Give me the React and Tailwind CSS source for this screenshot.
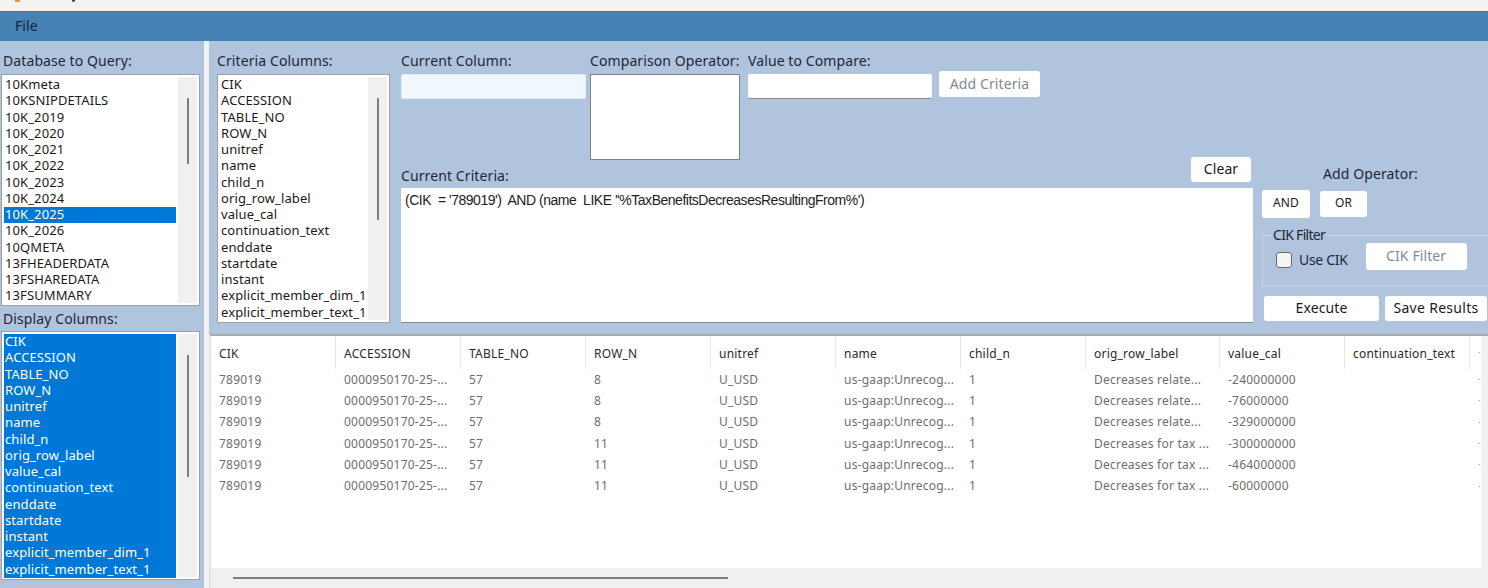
const databases = ["10Kmeta", "10KSNIPDETAILS", "10K_2019", "10K_2020", "10K_2021", "10K_2022", "10K_2023", "10K_2024", "10K_2025", "10K_2026", "10QMETA", "13FHEADERDATA", "13FSHAREDATA", "13FSUMMARY"];
const columns = ["CIK", "ACCESSION", "TABLE_NO", "ROW_N", "unitref", "name", "child_n", "orig_row_label", "value_cal", "continuation_text", "enddate", "startdate", "instant", "explicit_member_dim_1", "explicit_member_text_1"];

const gridCols = [
  { title: "CIK", w: "w-[125px]" },
  { title: "ACCESSION", w: "w-[125px]" },
  { title: "TABLE_NO", w: "w-[125px]" },
  { title: "ROW_N", w: "w-[125px]" },
  { title: "unitref", w: "w-[125px]" },
  { title: "name", w: "w-[125px]" },
  { title: "child_n", w: "w-[125px]" },
  { title: "orig_row_label", w: "w-[134px]" },
  { title: "value_cal", w: "w-[125px]" },
  { title: "continuation_text", w: "w-[125px]" },
];

const rows = [
  ["789019", "0000950170-25-...", "57", "8", "U_USD", "us-gaap:Unrecog...", "1", "Decreases relate...", "-240000000", ""],
  ["789019", "0000950170-25-...", "57", "8", "U_USD", "us-gaap:Unrecog...", "1", "Decreases relate...", "-76000000", ""],
  ["789019", "0000950170-25-...", "57", "8", "U_USD", "us-gaap:Unrecog...", "1", "Decreases relate...", "-329000000", ""],
  ["789019", "0000950170-25-...", "57", "11", "U_USD", "us-gaap:Unrecog...", "1", "Decreases for tax ...", "-300000000", ""],
  ["789019", "0000950170-25-...", "57", "11", "U_USD", "us-gaap:Unrecog...", "1", "Decreases for tax ...", "-464000000", ""],
  ["789019", "0000950170-25-...", "57", "11", "U_USD", "us-gaap:Unrecog...", "1", "Decreases for tax ...", "-60000000", ""],
];

function ListBox({ items, selected, allSelected, className, thumbClass }) {
  return (
    <div className={`flex bg-white border border-[#a0a0a0] pl-[2px] pt-[2px] pb-[2px] pr-[2px] overflow-hidden text-[13px] ${className}`}>
      <div className={`flex-1 min-w-0 ${allSelected ? "bg-[#0078d7]" : ""}`}>
        {items.map((item) => (
          <div
            key={item}
            className={`h-[16.27px] leading-[15.5px] pl-[1px] whitespace-nowrap ${
              allSelected || item === selected ? "bg-[#0078d7] text-white" : "text-[#1a1a1a]"
            }`}
          >
            {item}
          </div>
        ))}
      </div>
      <div className="w-[19px] ml-[2px] shrink-0 bg-[#f0f0f0] flex justify-center">
        <div className={`w-[2px] bg-[#7d7d7d] ${thumbClass}`} />
      </div>
    </div>
  );
}

function Btn({ children, className = "", disabled }) {
  return (
    <button className={`bg-white rounded-[3px] shadow-[0_0_1px_#c8d2e0] flex items-center justify-center pb-[2px] ${disabled ? "text-[#7f8a96] bg-[#f7f9fc]" : "text-[#1a1a1a]"} ${className}`}>
      {children}
    </button>
  );
}

export default function App() {
  return (
    <div className="w-[1488px] h-[588px] overflow-hidden flex flex-col bg-[#b0c4de] text-[12px] font-['Noto_Sans','DejaVu_Sans',sans-serif] tracking-[0.1px]">
      {/* title bar, cut off at the top of the shot */}
      <div className="h-[11px] shrink-0 bg-[#f3f3f3] flex items-start pl-[15px]">
        <div className="w-[5px] h-[2px] bg-[#e8962e]" />
        <div className="w-[3px] h-[2px] bg-[#4a4a4a] ml-[52px] rounded-b" />
      </div>
      <div className="h-[30px] shrink-0 bg-[#4682b4] border-t border-[#3d76a6] flex items-center pl-[15px] pb-[2px] text-[14px] text-[#10243a]">
        File
      </div>

      <div className="flex-1 min-h-0 flex">
        {/* left column */}
        <div className="w-[204px] shrink-0 flex flex-col pl-[1px] pr-[4px]">
          <div className="h-[33px] shrink-0 flex items-end pb-[3px] pl-[2px] text-[14px] text-[#1d2733]">Database to Query:</div>
          <ListBox items={databases} selected="10K_2025" className="h-[232px]" thumbClass="h-[66px] mt-[21px]" />
          <div className="h-[25px] shrink-0 flex items-end pb-[2px] pl-[2px] text-[14px] text-[#1d2733]">Display Columns:</div>
          <ListBox items={columns} allSelected className="h-[249px]" thumbClass="h-[122px] mt-[21px]" />
        </div>

        {/* white splitter */}
        <div className="w-[5px] shrink-0 bg-[#f0f0f0]" />

        {/* right side */}
        <div className="flex-1 min-w-0 flex flex-col">
          <div className="h-[292px] shrink-0 flex pl-[8px]">
            <div className="w-[173px] shrink-0 flex flex-col">
              <div className="h-[33px] shrink-0 flex items-end pb-[3px] text-[14px] text-[#1d2733]">Criteria Columns:</div>
              <ListBox items={columns} className="h-[249px]" thumbClass="h-[122px] mt-[21px]" />
            </div>

            <div className="w-[852px] shrink-0 ml-[11px] flex flex-col">
              <div className="flex h-[107px] mt-[12px] shrink-0">
                <div className="w-[185px] shrink-0 flex flex-col">
                  <div className="h-[21px] text-[14px] text-[#1d2733] leading-[16px]">Current Column:</div>
                  <div className="h-[25px] bg-[#f0f7ff] rounded-[2px] border border-[#e3ebf5]" />
                </div>
                <div className="w-[150px] shrink-0 ml-[4px] flex flex-col">
                  <div className="h-[21px] text-[14px] text-[#1d2733] leading-[16px] whitespace-nowrap">Comparison Operator:</div>
                  <div className="flex-1 bg-white border border-[#808080]" />
                </div>
                <div className="w-[184px] shrink-0 ml-[8px] flex flex-col">
                  <div className="h-[21px] text-[14px] text-[#1d2733] leading-[16px]">Value to Compare:</div>
                  <div className="h-[25px] bg-white border-b border-[#8a8a8a] rounded-[2px]" />
                </div>
                <Btn disabled className="w-[101px] h-[26px] ml-[7px] mt-[18px] text-[14px]">Add Criteria</Btn>
              </div>
              <div className="h-[28px] shrink-0 flex items-end justify-between">
                <div className="text-[14px] text-[#1d2733] leading-[17px] mb-[4px]">Current Criteria:</div>
                <Btn className="w-[60px] h-[25px] mr-[2px] mb-[6px] text-[14px]">Clear</Btn>
              </div>
              <div className="h-[135px] shrink-0 bg-white border-b border-[#8a8a8a] pl-[4px] pt-[3px] text-[#222] font-['Liberation_Sans',sans-serif] text-[14px] tracking-[-0.48px] leading-[18px] whitespace-pre">
                {"(CIK  = '789019')  AND (name  LIKE ''%TaxBenefitsDecreasesResultingFrom%')"}
              </div>
            </div>

            <div className="flex-1 min-w-0 ml-[9px] flex flex-col">
              <div className="mt-[125px] h-[16px] pl-[61px] text-[14px] text-[#1d2733] leading-[16px]">Add Operator:</div>
              <div className="flex mt-[8px] gap-[10px] items-center h-[28px]">
                <Btn className="w-[48px] h-[28px] text-[12px]">AND</Btn>
                <Btn className="w-[47px] h-[26px] text-[12px]">OR</Btn>
              </div>
              <fieldset className="mt-[10px] h-[58px] border border-[#c9d5e6] border-r-0 pl-[13px] -mr-[1px]">
                <legend className="text-[14px] text-[#1d2733] leading-[14px] tracking-[-0.7px] -ml-[4px] px-[1px]">CIK Filter</legend>
                <div className="flex items-start">
                  <div className="w-[16px] h-[16px] mt-[10px] rounded-[3px] border border-[#6b6b6b] bg-[#f4f4f4] shrink-0" />
                  <span className="ml-[7px] mt-[8px] text-[14px] leading-[20px] tracking-[-0.3px] text-[#1d2733]">Use CIK</span>
                  <Btn disabled className="w-[101px] h-[27px] ml-[18px] mt-[1px] text-[14px]">CIK Filter</Btn>
                </div>
              </fieldset>
              <div className="flex mt-[10px] pl-[2px] gap-[6px]">
                <Btn className="w-[115px] h-[25px] text-[14px]">Execute</Btn>
                <Btn className="w-[102px] h-[25px] text-[14px] tracking-[0.3px]">Save Results</Btn>
              </div>
            </div>
          </div>

          {/* results grid */}
          <div className="flex-1 min-h-0 flex flex-col border-t-2 border-l-2 bg-[#f0f0f0] mt-[1px] border-l-[#e6e6e6] border-t-[#a8a8a8]">
            <div className="flex-1 min-h-0 flex">
              <div className="flex-1 min-w-0 bg-white rounded-br-[2px] overflow-hidden tracking-[0.22px]">
                <div className="flex h-[33px] items-center">
                  {gridCols.map((c) => (
                    <div key={c.title} className={`${c.w} shrink-0 h-full pl-[8px] pt-[3px] flex items-center border-r border-[#e6e6e6] text-[#2a2a2a]`}>
                      {c.title}
                    </div>
                  ))}
                  <div className="pl-[8px] text-[#e8962e] text-[10px]">·</div>
                </div>
                {rows.map((row, i) => (
                  <div key={i} className="flex h-[21.3px] items-center text-[#6e6e6e]">
                    {row.map((cell, j) => (
                      <div key={j} className={`${gridCols[j].w} shrink-0 pl-[8px] whitespace-nowrap overflow-hidden`}>
                        {cell}
                      </div>
                    ))}
                    <div className="pl-[8px] text-[#e8962e] text-[10px]">·</div>
                  </div>
                ))}
              </div>
              <div className="w-[7px] shrink-0" />
            </div>
            <div className="h-[20px] shrink-0 flex items-center pl-[22px]">
              <div className="w-[495px] h-[2px] bg-[#7d7d7d]" />
            </div>
          </div>
        </div>
      </div>
    </div>
  );
}
